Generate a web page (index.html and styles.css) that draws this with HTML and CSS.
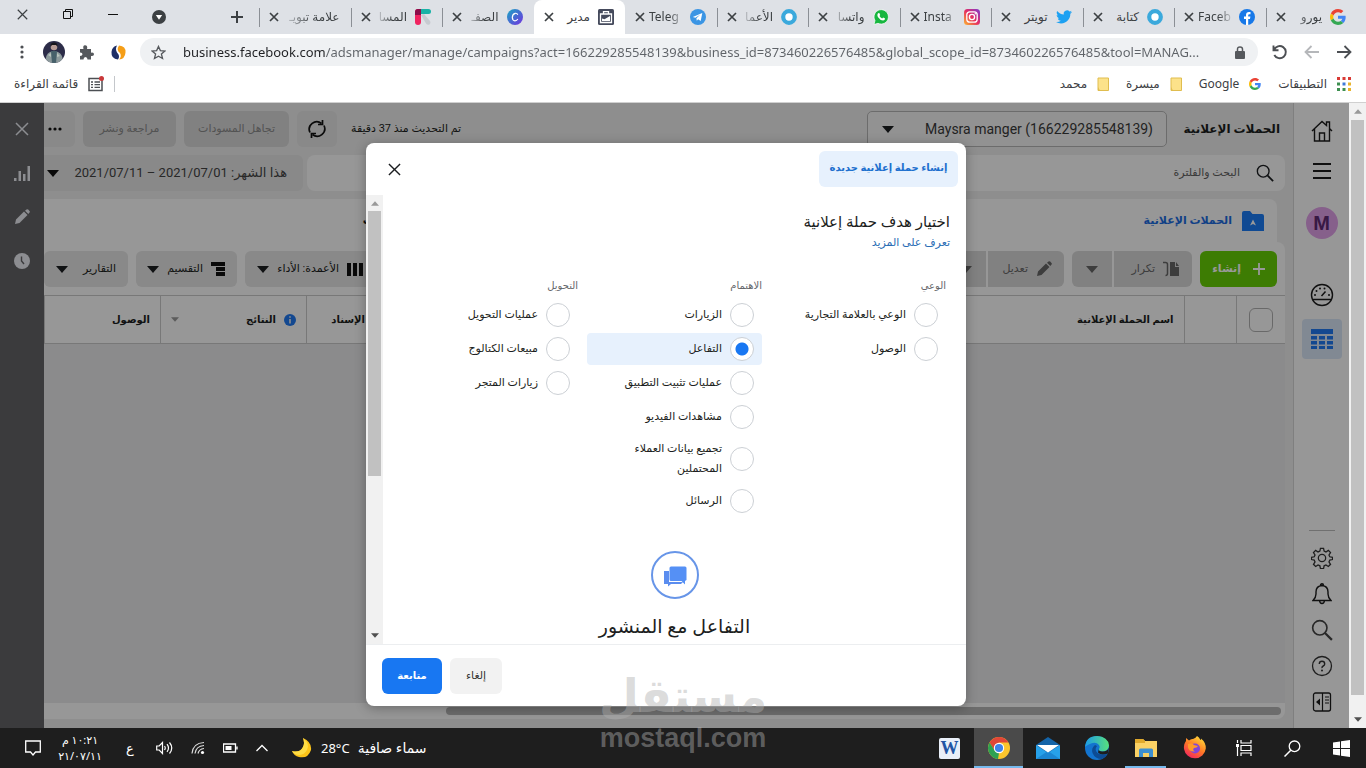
FILE: index.html
```html
<!DOCTYPE html>
<html lang="ar" dir="rtl">
<head>
<meta charset="utf-8">
<title>مدير الإعلانات</title>
<link rel="stylesheet" href="styles.css">
</head>
<body>
<svg class="defs" aria-hidden="true">
  <symbol id="g" viewBox="0 0 48 48"><path fill="#ea4335" d="M24 9.500c3.500 0 6.700 1.200 9.200 3.600l6.900-6.900C35.900 2.400 30.500 0 24 0 14.600 0 6.500 5.400 2.600 13.200l8 6.200C12.400 13.700 17.700 9.500 24 9.500z"/><path fill="#4285f4" d="M47 24.500c0-1.600-.2-3.100-.4-4.500H24v9h12.900c-.6 3-2.300 5.500-4.800 7.200l7.700 6C44.400 38 47 31.800 47 24.500z"/><path fill="#fbbc05" d="M10.500 28.600c-.5-1.500-.8-3-.8-4.600s.3-3.100.8-4.600l-8-6.200C1 16.500 0 20.100 0 24s.9 7.500 2.600 10.800z"/><path fill="#34a853" d="M24 48c6.500 0 11.900-2.100 15.900-5.800l-7.700-6c-2.200 1.500-4.900 2.300-8.200 2.300-6.300 0-11.600-4.200-13.500-9.900l-8 6.200C6.500 42.600 14.600 48 24 48z"/></symbol>
  <symbol id="x" viewBox="0 0 10 10"><path d="M1 1l8 8M9 1l-8 8" stroke="currentColor" stroke-width="1.700" fill="none"/></symbol>
  <symbol id="thinx" viewBox="0 0 14 14"><path d="M1 1l12 12M13 1L1 13" stroke="currentColor" stroke-width="1.500" fill="none"/></symbol>
  <symbol id="caret" viewBox="0 0 12 7"><path d="M0 0h12L6 7z" fill="currentColor"/></symbol>
  <symbol id="ring" viewBox="0 0 16 16"><circle cx="8" cy="8" r="5.800" fill="#fff" stroke="#3ba9dc" stroke-width="4.200"/></symbol>
  <symbol id="pencil" viewBox="0 0 16 16"><path d="M1 15l1-4.500L10 2.600l3.500 3.500-8 8zM11 1.700L12.500.4q.9-.6 1.700.2l1.300 1.300q.8.900 0 1.700L14.300 5z" fill="currentColor"/></symbol>
  <symbol id="folder" viewBox="0 0 12 14"><path d="M1 1h10.500v12.500H1z" fill="#fce28a" stroke="#e0bd4f"/><path d="M1 10l2 3.500H1z" fill="#e0bd4f"/></symbol>
  <symbol id="lens" viewBox="0 0 20 20"><circle cx="8" cy="8" r="6.500" fill="none" stroke="currentColor" stroke-width="1.500"/><path d="M12.700 12.700L19 19" stroke="currentColor" stroke-width="2"/></symbol>
</svg>

<header class="browser">
  <div class="tabstrip">
    <div class="tabs">
      <div class="tab"><svg class="fav"><use href="#g"/></svg><span>يورو</span><svg class="tx"><use href="#x"/></svg></div>
      <div class="tab"><svg class="fav" viewBox="0 0 16 16"><circle cx="8" cy="8" r="8" fill="#1778e8"/><path d="M7 16v-6H5V7.500h2V6q0-3 3-3h1.500v2.300h-1.300q-1 0-1 1v1.200h2.200L11 10H9.200v6z" fill="#fff"/></svg><span dir="ltr">Faceb</span><svg class="tx"><use href="#x"/></svg></div>
      <div class="tab"><svg class="fav"><use href="#ring"/></svg><span class="whole">كتابة</span><svg class="tx"><use href="#x"/></svg></div>
      <div class="tab"><svg class="fav" viewBox="0 0 24 24"><path fill="#1da1f2" d="M24 4.600c-.9.400-1.800.7-2.800.8 1-.6 1.800-1.600 2.200-2.700-1 .6-2 1-3.100 1.200A4.900 4.900 0 0 0 11.800 8.400C7.700 8.100 4.100 6.100 1.700 3.100.4 5.300 1 8.200 3.200 9.700c-.8 0-1.600-.3-2.200-.6 0 2.300 1.600 4.400 3.900 4.900-.7.200-1.500.2-2.200.1.600 2 2.400 3.400 4.600 3.400A9.900 9.900 0 0 1 0 19.500a13.900 13.900 0 0 0 7.500 2.200c9.100 0 14.300-7.700 14-14.600 1-.7 1.800-1.600 2.500-2.500z"/></svg><span class="whole">تويتر</span><svg class="tx"><use href="#x"/></svg></div>
      <div class="tab"><svg class="fav" viewBox="0 0 16 16"><linearGradient id="ig" x1="0" y1="1" x2="1" y2="0"><stop stop-color="#fdb62f"/><stop offset=".5" stop-color="#e52d63"/><stop offset="1" stop-color="#7d3bd3"/></linearGradient><rect width="16" height="16" rx="3.500" fill="url(#ig)"/><rect x="2.800" y="2.800" width="10.400" height="10.400" rx="3" fill="none" stroke="#fff" stroke-width="1.300"/><circle cx="8" cy="8" r="2.600" fill="none" stroke="#fff" stroke-width="1.300"/><circle cx="11.300" cy="4.800" r=".8" fill="#fff"/></svg><span dir="ltr">Insta</span><svg class="tx"><use href="#x"/></svg></div>
      <div class="tab"><svg class="fav" viewBox="0 0 16 16"><path d="M1 15.500l1-4A7.200 7.200 0 1 1 5 14.300z" fill="#17b63f" stroke="#fff" stroke-width=".7"/><path d="M5 4.300l1.300-.2.900 2-.7 1q1 1.800 2.700 2.400l.9-1 2 1q-.2 2-2 2.100-3-.1-5.200-3.500-1.200-2 .1-3.800z" fill="#fff"/></svg><span>واتسا</span><svg class="tx"><use href="#x"/></svg></div>
      <div class="tab"><svg class="fav"><use href="#ring"/></svg><span>الأعما</span><svg class="tx"><use href="#x"/></svg></div>
      <div class="tab plain"><svg class="fav" viewBox="0 0 16 16"><circle cx="8" cy="8" r="8" fill="#3b95e4"/><path d="M2.800 7.900l9.500-3.800-1.600 8-2.600-1.900-1.300 1.500-.4-2.500 4-3.700-5 3.200z" fill="#fff"/></svg><span dir="ltr">Teleg</span><svg class="tx"><use href="#x"/></svg></div>
      <div class="tab active"><svg class="fav" viewBox="0 0 16 16"><rect width="16" height="16" rx="1.500" fill="#454a5c"/><path d="M5.500 5V2.600h5V5M2.500 5h11v8.500h-11z" fill="none" stroke="#fff" stroke-width="1.300"/><path d="M4 12V9.500l2.500.8L12 7v5z" fill="#fff"/></svg><span class="whole">مدير</span><svg class="tx"><use href="#x"/></svg></div>
      <div class="tab"><svg class="fav" viewBox="0 0 16 16"><linearGradient id="cv" x1="0" y1="0" x2="1" y2="1"><stop stop-color="#18a8c4"/><stop offset="1" stop-color="#7430e0"/></linearGradient><circle cx="8" cy="8" r="8" fill="url(#cv)"/><path d="M10.800 5.700Q10 4 8.200 4.300 5.400 5 5.300 8.500q.2 3.200 2.700 3.300 1.700 0 2.800-1.800" fill="none" stroke="#fff" stroke-width="1.200"/></svg><span>الصفـ</span><svg class="tx"><use href="#x"/></svg></div>
      <div class="tab"><svg class="fav" viewBox="0 0 16 16"><path d="M6 0h7.500Q16 0 16 2.500T13.500 5H6z" fill="#19b2a6"/><path d="M6 6l3-1 6 7q1 2-.5 3.500-2 1-3.300-.8z" fill="#c7cbd1"/><path d="M0 3Q0 0 3 0h3v13q0 3-3 3t-3-3z" fill="#f02360"/><path d="M0 3Q0 0 3 0h3v6H0z" fill="#8b0d4a"/></svg><span>المسا</span><svg class="tx"><use href="#x"/></svg></div>
      <div class="tab noicon"><span>علامة تبويـ</span><svg class="tx"><use href="#x"/></svg></div>
    </div>
    <div class="wincontrols">
      <button class="newtab" aria-label="علامة تبويب جديدة"><svg width="12" height="12" viewBox="0 0 12 12"><path d="M6 0v12M0 6h12" stroke="#3c4043" stroke-width="2"/></svg></button>
      <button class="tabsearch" aria-label="بحث"><svg width="14" height="14" viewBox="0 0 14 14"><circle cx="7" cy="7" r="7" fill="#3c4043"/><path d="M3.800 5h6.400L7 9.800z" fill="#fff"/></svg></button>
      <button aria-label="تصغير"><svg width="10" height="10" viewBox="0 0 10 10"><path d="M0 5.500h10" stroke="#111"/></svg></button>
      <button aria-label="استعادة"><svg width="10" height="10" viewBox="0 0 10 10"><path d="M.5 2.500h7v7h-7zM2.500 2.500v-2h7v7h-2" fill="none" stroke="#111"/></svg></button>
      <button aria-label="إغلاق"><svg width="11" height="11" viewBox="0 0 14 14"><use href="#thinx"/></svg></button>
    </div>
  </div>

  <div class="toolbar">
    <button aria-label="رجوع"><svg width="16" height="16" viewBox="0 0 16 16"><path d="M1 8h13M8.500 2l6 6-6 6" fill="none" stroke="#4c4f53" stroke-width="1.800"/></svg></button>
    <button aria-label="تقدم"><svg width="16" height="16" viewBox="0 0 16 16"><path d="M15 8H2M7.500 2l-6 6 6 6" fill="none" stroke="#b5b7ba" stroke-width="1.800"/></svg></button>
    <button aria-label="تحديث"><svg width="16" height="16" viewBox="0 0 16 16"><path d="M1.500 1.500v4.700h5M2 6a6.100 6.100 0 1 1 .3 5" fill="none" stroke="#4c4f53" stroke-width="1.900"/></svg></button>
    <label class="urlbar">
      <svg width="10" height="13" viewBox="0 0 10 13"><rect y="5" width="10" height="8" rx="1" fill="#55585c"/><path d="M2.500 5V3.200q0-2.200 2.500-2.200t2.500 2.200V5" fill="none" stroke="#55585c" stroke-width="1.500"/></svg>
      <input dir="ltr" aria-label="العنوان" value="business.facebook.com/adsmanager/manage/campaigns?act=166229285548139&amp;business_id=873460226576485&amp;global_scope_id=873460226576485&amp;tool=MANAG...">
      <svg width="15" height="15" viewBox="0 0 16 16"><path d="M8 1.500l2 4.500 4.800.4-3.700 3.200 1.200 4.800L8 11.900l-4.300 2.500 1.200-4.800L1.200 6.400 6 6z" fill="none" stroke="#55585c" stroke-width="1.400"/></svg>
    </label>
    <button aria-label="إضافة"><svg width="15" height="15" viewBox="0 0 15 15"><path d="M8 0.500Q15 1 14.500 7.500 14 14 8 14.500q3-3 1-6.500Q5 5 8 .5z" fill="#f59e17"/><path d="M6 .5Q4 4 6 7.500q3.500 3.500 1 7Q0 14 .5 7 1 1.500 6 .5z" fill="#1f2f66"/></svg></button>
    <button aria-label="الإضافات"><svg width="15" height="15" viewBox="0 0 15 15"><path d="M1 4h3.500q-1-3.500 1.500-3.700Q9 .500 8 4h4v3.700q3-.6 3 1.600t-3 1.700v3.500H8.500q0-2.500-2-2.500T4.500 14.500H1V11q2.500 0 2.500-1.800T1 7.500z" fill="#55585c"/></svg></button>
    <button aria-label="الملف الشخصي"><svg width="22" height="22" viewBox="0 0 22 22"><clipPath id="av"><circle cx="11" cy="11" r="11"/></clipPath><g clip-path="url(#av)"><path fill="#2c2c48" d="M0 0h22v22H0z"/><path fill="#8d9a9c" d="M3 22q-1-9 4-11l4-1 4 1q5 2 5 11z"/><path fill="#46606a" d="M8 10h6l-1 12H9z"/><circle cx="11" cy="6" r="3.300" fill="#b89c95"/><path d="M7.500 6Q7 1.500 11 1.500T14.500 6L13 4H9z" fill="#18171c"/><path fill="#b9c3bd" d="M5 14l3-2v4zM14 12l3 3-3 1z"/></g></svg></button>
    <button aria-label="القائمة"><svg width="4" height="16" viewBox="0 0 4 16"><g fill="#4c4f53"><circle cx="2" cy="3" r="1.600"/><circle cx="2" cy="8" r="1.600"/><circle cx="2" cy="13" r="1.600"/></g></svg></button>
  </div>

  <nav class="bookmarks">
    <a href="#"><svg width="14" height="14" viewBox="0 0 14 14"><path fill="#d93a35" d="M0 0h3v3H0zM5.500 0h3v3h-3zM11 0h3v3h-3z"/><path fill="#3d8f50" d="M0 5.500h3v3H0zM0 11h3v3H0z"/><path fill="#3f79d8" d="M5.500 5.500h3v3h-3z"/><path fill="#e8b32c" d="M11 5.500h3v3h-3zM11 11h3v3h-3z"/><path fill="#3d8f50" d="M5.500 11h3v3h-3z"/></svg>التطبيقات</a>
    <a href="#"><svg width="12" height="12"><use href="#g"/></svg><bdi>Google</bdi></a>
    <a href="#"><svg width="12" height="14"><use href="#folder"/></svg>ميسرة</a>
    <a href="#"><svg width="12" height="14"><use href="#folder"/></svg>محمد</a>
    <a href="#" class="reading"><svg width="16" height="16" viewBox="0 0 16 16"><path d="M1 2.500h13v12H1z" fill="none" stroke="#4c4f53" stroke-width="1.500"/><path d="M3 6h2M6.500 6h5.500M3 8.700h2M6.500 8.700h5.500M3 11.400h2M6.500 11.400h5.500" stroke="#4c4f53" stroke-width="1.300"/><circle cx="13.500" cy="2.500" r="2.500" fill="#c9383a"/></svg>قائمة القراءة</a>
  </nav>
</header>

<div class="viewport">
  <div class="vscroll page-scroll"><svg class="arr up"><use href="#caret"/></svg><i></i><svg class="arr"><use href="#caret"/></svg></div>
  <div class="app">
    <nav class="rail">
      <a href="#" aria-label="الرئيسية"><svg width="22" height="22" viewBox="0 0 22 22"><path d="M1 11L11 1.500l4.500 4V2h3v6.500L21 11M3.500 9v12h15V9M8.500 21v-8h5v8" fill="none" stroke="#1c1c1c" stroke-width="1.400"/></svg></a>
      <a href="#" aria-label="القائمة"><svg width="18" height="16" viewBox="0 0 18 16"><path d="M0 1h18M0 8h18M0 15h18" stroke="#1c1c1c" stroke-width="2"/></svg></a>
      <a href="#" class="avatar">M</a>
      <a href="#" class="gauge" aria-label="نظرة عامة"><svg width="24" height="24" viewBox="0 0 24 24"><circle cx="12" cy="12" r="10.500" fill="none" stroke="#1c1c1c" stroke-width="1.400"/><path d="M2 16.500h20M11.500 13l4-4.500" stroke="#1c1c1c" stroke-width="1.500"/><g fill="#1c1c1c"><circle cx="5" cy="12" r="1"/><circle cx="6.500" cy="8" r="1"/><circle cx="10" cy="5.500" r="1"/><circle cx="14.500" cy="5.500" r="1"/><circle cx="19" cy="12" r="1"/></g></svg></a>
      <a href="#" class="on" aria-label="الحملات"><svg width="22" height="20" viewBox="0 0 22 20"><path fill="#2079f0" d="M0 0h22v5H0zM0 7h6v3.500H0zM8 7h6v3.500H8zM16 7h6v3.500h-6zM0 12h6v3.500H0zM8 12h6v3.500H8zM16 12h6v3.500h-6zM0 17h6v3H0zM8 17h6v3H8zM16 17h6v3h-6z"/></svg></a>
      <div class="railfoot">
        <a href="#" aria-label="الإعدادات"><svg width="22" height="22" viewBox="0 0 24 24"><circle cx="12" cy="12" r="4" fill="none" stroke="#333" stroke-width="1.400"/><path d="M10.300 1.500h3.400l.6 3 2 .9 2.600-1.700 2.400 2.400-1.700 2.600.9 2 3 .6v2.400l-3 .6-.9 2 1.700 2.600-2.400 2.400-2.600-1.700-2 .9-.6 3h-3.400l-.6-3-2-.9-2.600 1.700-2.400-2.400 1.700-2.600-.9-2-3-.6v-2.400l3-.6.9-2-1.700-2.600 2.400-2.400 2.600 1.700 2-.9z" fill="none" stroke="#333" stroke-width="1.400"/></svg></a>
        <a href="#" aria-label="الإشعارات"><svg width="20" height="22" viewBox="0 0 20 22"><path d="M1 17.500q3-3 3-6.500V9q0-6 6-6.500 6 .5 6 6.500v2q0 3.500 3 6.500zM7.500 17.500q.3 3 2.500 3t2.500-3M8.500 2.500q0-1.700 1.500-1.700t1.500 1.700" fill="none" stroke="#1c1c1c" stroke-width="1.400"/></svg></a>
        <a href="#" aria-label="بحث"><svg width="22" height="22" class="dim"><use href="#lens"/></svg></a>
        <a href="#" aria-label="مساعدة"><svg width="22" height="22" viewBox="0 0 22 22"><circle cx="11" cy="11" r="9.500" fill="none" stroke="#333" stroke-width="1.300"/><path d="M8.300 9q0-2.700 2.700-2.700T13.700 9q0 1.300-1.500 2T11 13.200" fill="none" stroke="#333" stroke-width="1.400"/><circle cx="11" cy="15.500" r="1" fill="#333"/></svg></a>
        <a href="#" aria-label="طي"><svg width="20" height="20" viewBox="0 0 20 20"><rect x="1.500" y="1" width="17" height="18" rx="2" fill="none" stroke="#1c1c1c" stroke-width="1.300"/><path d="M10.500 1v18M13 5h4M13 8h4M13 11h4" stroke="#1c1c1c" stroke-width="1.200"/><path d="M4 10l4-3.500v7z" fill="#1c1c1c"/></svg></a>
      </div>
    </nav>

    <main class="main">
      <div class="row top">
        <h1>الحملات الإعلانية</h1>
        <div class="account"><select aria-label="الحساب الإعلاني"><option>Maysra manger (166229285548139)</option></select><svg class="car"><use href="#caret"/></svg></div>
        <span class="updated">تم التحديث منذ 37 دقيقة</span>
        <button class="btn refresh" aria-label="تحديث"><svg width="20" height="20" viewBox="0 0 20 20"><path d="M3 13.500A7.500 7.500 0 0 1 14.500 4.500M17 6.500A7.500 7.500 0 0 1 5.500 15.500" fill="none" stroke="#111" stroke-width="1.700"/><path d="M15.500 1v4.500H11M4.500 19v-4.500H9" fill="none" stroke="#111" stroke-width="1.700"/></svg></button>
        <button class="btn off drafts">تجاهل المسودات</button>
        <button class="btn off review">مراجعة ونشر</button>
        <button class="btn more" aria-label="المزيد"><svg width="14" height="4" viewBox="0 0 14 4"><g fill="#111"><circle cx="2" cy="2" r="1.600"/><circle cx="7" cy="2" r="1.600"/><circle cx="12" cy="2" r="1.600"/></g></svg></button>
      </div>
      <div class="row find">
        <label class="search"><svg width="18" height="18"><use href="#lens"/></svg><input placeholder="البحث والفلترة" aria-label="البحث والفلترة"></label>
        <button class="btn date"><span>هذا الشهر: 2021/07/01 – 2021/07/11</span><svg class="car"><use href="#caret"/></svg></button>
      </div>
      <div class="levels">
        <a href="#" class="cur"><svg width="22" height="20" viewBox="0 0 22 20"><path d="M0 2q0-2 2-2h6l2.500 3H20q2 0 2 2v15H0z" fill="#1b7cf5"/><path d="M11 8.500l3 6-3-1.500-3 1.500z" fill="#fff"/></svg>الحملات الإعلانية</a>
        <a href="#"><svg width="22" height="20" viewBox="0 0 22 20"><path d="M0 0h10v9H0zM12 0h10v9H12zM0 11h10v9H0zM12 11h10v9H12z" fill="#333"/></svg>المجموعات الإعلانية</a>
        <a href="#"><svg width="22" height="20" viewBox="0 0 22 20"><path d="M0 2h22v16H0z" fill="#333"/></svg>الإعلانات</a>
      </div>
      <section class="sheet">
        <div class="tools">
          <button class="btn create"><svg width="12" height="12" viewBox="0 0 12 12"><path d="M6 0v12M0 6h12" stroke="#fff" stroke-width="1.800"/></svg>إنشاء</button>
          <div class="pair"><button class="btn off dup"><svg width="17" height="16" viewBox="0 0 17 16"><path d="M7 1h5v5h4v9H7zM13 1l3 4h-3z" fill="#666"/><path d="M0 1.500h2.500q2 0 2 2v9q0 2-2 2" fill="none" stroke="#666" stroke-width="1.500"/></svg>تكرار</button><button class="btn off arrow" aria-label="خيارات"><svg class="car"><use href="#caret"/></svg></button></div>
          <div class="pair"><button class="btn off edit"><svg width="16" height="16"><use href="#pencil"/></svg>تعديل</button><button class="btn off arrow" aria-label="خيارات"><svg class="car"><use href="#caret"/></svg></button></div>
          <button class="btn cols"><svg width="16" height="13" viewBox="0 0 16 13"><path d="M0 0h4v13H0zM6 0h4v13H6zM12 0h4v13h-4z" fill="#111"/></svg>الأعمدة: الأداء<svg class="car"><use href="#caret"/></svg></button>
          <button class="btn split"><svg width="14" height="14" viewBox="0 0 14 14"><path d="M0 0h14v4H0zM5 5h9v4H5zM5 10h9v4H5z" fill="#111"/></svg>التقسيم<svg class="car"><use href="#caret"/></svg></button>
          <button class="btn reports">التقارير<svg class="car"><use href="#caret"/></svg></button>
        </div>
        <table class="grid">
          <colgroup><col class="c1"><col class="c2"><col><col class="c4"><col class="c5"><col class="c6"></colgroup>
          <tr><th><input type="checkbox" aria-label="تحديد الكل"></th><th></th><th class="name">اسم الحملة الإعلانية</th><th class="attr">الإسناد</th>
          <th><div class="res"><svg width="12" height="12" viewBox="0 0 12 12"><circle cx="6" cy="6" r="6" fill="#2079f0"/><path d="M6 5v4.500M6 2.300v1.500" stroke="#eee" stroke-width="1.600"/></svg>النتائج<svg class="car sm"><use href="#caret"/></svg></div></th><th>الوصول</th></tr>
        </table>
        <div class="empty"></div>
        <div class="hscroll"><i></i></div>
      </section>
    </main>

    <aside class="side">
      <button aria-label="إغلاق"><svg width="14" height="14"><use href="#thinx"/></svg></button>
      <button aria-label="الرسوم"><svg width="16" height="15" viewBox="0 0 16 15"><path d="M0 12h2.500v3H0zM4.500 5H7v10H4.500zM9 8h2.500v7H9zM13.500 0H16v15h-2.500z" fill="currentColor"/></svg></button>
      <button aria-label="تعديل"><svg width="16" height="16"><use href="#pencil"/></svg></button>
      <button aria-label="السجل"><svg width="16" height="16" viewBox="0 0 16 16"><circle cx="8" cy="8" r="8" fill="currentColor"/><path d="M7.500 3.500V8l2.500 3" fill="none" stroke="#3b3b3d" stroke-width="1.400"/></svg></button>
    </aside>

    <div class="backdrop">
      <form class="modal" role="dialog" aria-label="إنشاء حملة إعلانية جديدة">
        <div class="mhead"><b>إنشاء حملة إعلانية جديدة</b><button type="button" aria-label="إغلاق"><svg width="13" height="13"><use href="#thinx"/></svg></button></div>
        <div class="mbody">
          <div class="mcontent">
            <h2>اختيار هدف حملة إعلانية</h2>
            <a href="#" class="learn">تعرف على المزيد</a>
            <div class="goals">
              <fieldset><legend>الوعي</legend>
                <label><input type="radio" name="goal">الوعي بالعلامة التجارية</label>
                <label><input type="radio" name="goal">الوصول</label></fieldset>
              <fieldset><legend>الاهتمام</legend>
                <label><input type="radio" name="goal">الزيارات</label>
                <label class="sel"><input type="radio" name="goal" checked>التفاعل</label>
                <label><input type="radio" name="goal">عمليات تثبيت التطبيق</label>
                <label><input type="radio" name="goal">مشاهدات الفيديو</label>
                <label class="two"><input type="radio" name="goal"><span>تجميع بيانات العملاء المحتملين</span></label>
                <label><input type="radio" name="goal">الرسائل</label></fieldset>
              <fieldset><legend>التحويل</legend>
                <label><input type="radio" name="goal">عمليات التحويل</label>
                <label><input type="radio" name="goal">مبيعات الكتالوج</label>
                <label><input type="radio" name="goal">زيارات المتجر</label></fieldset>
            </div>
            <div class="detail">
              <svg width="48" height="48" viewBox="0 0 48 48"><circle cx="24" cy="24" r="23" fill="#fff" stroke="#6795e8" stroke-width="2"/><path d="M13 20h5v11h14l-2 2H20l-3 2.500V33h-4z" fill="#5b8def"/><path d="M20 15.500h14q1.500 0 1.500 1.500v12l-1.500 1v3.500L30.500 30H20q-1.500 0-1.500-1.500V17q0-1.500 1.500-1.500z" fill="#5590f5"/></svg>
              <h3>التفاعل مع المنشور</h3>
            </div>
          </div>
          <div class="vscroll"><svg class="arr up"><use href="#caret"/></svg><i></i><svg class="arr"><use href="#caret"/></svg></div>
        </div>
        <div class="mfoot"><button type="button" class="cancel">إلغاء</button><button type="button" class="go">متابعة</button></div>
      </form>
    </div>
  </div>
</div>

<footer class="taskbar">
  <button aria-label="ابدأ"><svg width="17" height="17" viewBox="0 0 17 17"><path d="M0 2.500l7-1V8H0zM8 1.300L17 0v8H8zM0 9h7v6.500l-7-1zM8 9h9v8l-9-1.300z" fill="#fff"/></svg></button>
  <button aria-label="بحث"><svg width="17" height="17" viewBox="0 0 17 17"><circle cx="10.500" cy="6.300" r="5.300" fill="none" stroke="#fff" stroke-width="1.300"/><path d="M6.800 10.200L.5 16.500" stroke="#fff" stroke-width="1.500"/></svg></button>
  <button aria-label="عرض المهام"><svg width="16" height="16" viewBox="0 0 16 16"><path d="M5 0v3h10V0M5 16v-3h10v3M5 5.500h10v5H5zM1.500 0v3M1.500 7v9" fill="none" stroke="#fff" stroke-width="1.200"/><path d="M0 4h3v3H0z" fill="#fff"/></svg></button>
  <button aria-label="Firefox"><svg width="24" height="24" viewBox="0 0 24 24"><linearGradient id="ff" x1=".8" y1="0" x2=".2" y2="1"><stop stop-color="#ffe03a"/><stop offset=".5" stop-color="#ff7a25"/><stop offset="1" stop-color="#f01f62"/></linearGradient><path d="M14 0q2 1 3.500 4 1-.5.500-1.500 5 4 4.800 10A11 11 0 0 1 1 13Q.5 8 3 5V2l3 2.500Q8 2.500 10 3q3-1 4-3z" fill="url(#ff)"/><circle cx="12" cy="12.500" r="5" fill="#8245d8"/><path d="M5 8q4-2 6 1l4 1q-1 2-4 2-2 2 1 3.500-6 .5-7-4z" fill="#ff9a2a"/></svg></button>
  <button class="open" aria-label="مستكشف الملفات"><svg width="22" height="20" viewBox="0 0 22 20"><path d="M0 1h8l2 2h12v16H0z" fill="#fad165"/><path d="M0 1h8l2 2v2H0z" fill="#e0a92c"/><path d="M4 19v-7q0-1.500 1.500-1.500h11q1.500 0 1.500 1.500v7h-4v-4H8v4z" fill="#3d8fd0"/></svg></button>
  <button aria-label="Edge"><svg width="24" height="24" viewBox="0 0 24 24"><linearGradient id="ed"><stop stop-color="#1c9be8"/><stop offset="1" stop-color="#58e07c"/></linearGradient><circle cx="12" cy="12" r="12" fill="#1374cf"/><path d="M0 11Q1 0 12 0q11 .5 12 9.500-.5 6-7 6-4-.2-3-2.500 1.500-2 0-4-3-3.500-8-1.500T0 11z" fill="url(#ed)"/><path d="M10 9q-4 3-2.500 8 2.500 6 9.500 6 4-1.500 5.500-5-6 2-10-1-3.500-3.500-.5-7z" fill="#0d4c94"/><path d="M14 12.500q-1 3 3.500 3 5 0 6.500-4l-1 6q-7 2.500-10-1z" fill="#1e1e1e"/></svg></button>
  <button aria-label="البريد"><svg width="24" height="22" viewBox="0 0 24 22"><path d="M0 8l12-8 12 8v14H0z" fill="#1464a8"/><path d="M0 8l12 8L24 8v14H0z" fill="#27a1ea"/><path d="M0 22l12-8 12 8z" fill="#1b86d3"/><path d="M1 8h22l-11 7.500z" fill="#fff"/></svg></button>
  <button class="open now" aria-label="Chrome"><svg width="22" height="22" viewBox="0 0 22 22"><circle cx="11" cy="11" r="11" fill="#fbc52d"/><path d="M1.500 5.500A11 11 0 0 1 20.500 5.500H11L6.500 13.500z" fill="#e04638"/><path d="M1.500 5.500L6.700 13.500 11 16l-1 6A11 11 0 0 1 1.500 5.500z" fill="#2ea152"/><circle cx="11" cy="11" r="5.200" fill="#fff"/><circle cx="11" cy="11" r="4.100" fill="#3f83ea"/></svg></button>
  <button class="word" aria-label="Word"><span>W</span></button>
  <div class="tray">
    <span class="weather">سماء صافية</span><bdi>28°C</bdi>
    <svg width="20" height="20" viewBox="0 0 20 20"><path d="M11 0q9 4 8 12-3 9-12 7-5-1-7-6 8 2 11-4 2-4 0-9z" fill="#fcc419"/><path d="M12 1q6 5 3 11-4 7-12 4-2-1-3-3 8 2 11-4 2-4 0-9z" fill="#ffdd45"/></svg>
    <svg class="ti far" width="12" height="8" viewBox="0 0 12 8"><path d="M.5 7L6 1.500 11.500 7" fill="none" stroke="#fff" stroke-width="1.300"/></svg>
    <svg class="ti" width="15" height="10" viewBox="0 0 15 10"><path d="M.5 1h12v8H.5zM14 3.500v3" fill="none" stroke="#fff" stroke-width="1.300"/><path d="M2.500 3h6v4h-6z" fill="#fff"/></svg>
    <svg class="ti" width="14" height="14" viewBox="0 0 14 14"><g fill="none" stroke="#ddd" stroke-width="1.200"><path d="M1 12.500Q2 2 13 1.500M4 12.500Q5 5 13 4.500M7 12.500Q8 8 13 7.500"/></g><circle cx="11.500" cy="11.500" r="1.600" fill="#fff"/></svg>
    <svg class="ti" width="17" height="14" viewBox="0 0 17 14"><path d="M.7 5h2.500L6.500 1.500v11L3.200 9H.7z" fill="none" stroke="#fff" stroke-width="1.200"/><path d="M8.500 5q1.500 2 0 4M11 3.200q3 3.800 0 7.600M13.500 1.500q4.500 5.500 0 11" fill="none" stroke="#fff" stroke-width="1.200"/></svg>
    <span class="lang">ع</span>
    <time><span>١٠:٢١ م</span><span>٢١/٠٧/١١</span></time>
    <svg width="16" height="16" viewBox="0 0 16 16"><path d="M.7 1h14.600v11H10.500L8 15l-2.500-3H.7z" fill="none" stroke="#fff" stroke-width="1.300"/></svg>
  </div>
</footer>
<div class="watermark" aria-hidden="true"><b>مستقل</b><span dir="ltr">mostaql.com</span></div>
</body>
</html>
```
FILE: styles.css
```css
* { box-sizing: border-box; }
body { margin: 0; height: 100vh; display: flex; flex-direction: column; overflow: hidden; position: relative; background: #fff; color: #1c1e21; font: 11px/16px Roboto, "DejaVu Sans", sans-serif; white-space: nowrap; }
button, input, select { font: inherit; color: inherit; border: 0; margin: 0; padding: 0; background: none; }
button { display: flex; align-items: center; justify-content: center; }
a { color: inherit; text-decoration: none; }
h1, h2, h3 { margin: 0; }
svg { flex: none; display: block; }
.defs { position: absolute; width: 0; height: 0; }

/* Browser window */
.browser { font-family: "Noto Sans", "DejaVu Sans", sans-serif; font-size: 12px; flex: none; border-bottom: 1px solid #d0d0d0; }
.tabstrip { display: flex; height: 34px; background: #dee1e6; color: #3c4043; }
.tabs { flex: 1; display: flex; min-width: 0; padding-right: 9px; }
.tab { flex: 1 1 0; min-width: 0; display: flex; align-items: center; padding: 0 11px 0 10px; gap: 8px; position: relative; }
.tab::after { content: ""; position: absolute; left: 0; top: 8px; height: 19px; width: 1px; background: #8b8f95; }
.tab.plain::after, .tab.active::after { display: none; }
.tab.active { background: #fff; border-radius: 8px 8px 0 0; }
.tab span { flex: 1; min-width: 0; mask-image: linear-gradient(to left, #000 50%, rgba(0, 0, 0, .2)); }
.tab span[dir=ltr] { margin-left: -4px; mask-image: linear-gradient(to right, #000 60%, rgba(0, 0, 0, .2)); }
.tab span.whole { mask-image: none; }
.fav { width: 16px; height: 16px; }
.tx { width: 10px; height: 10px; }
.wincontrols { display: flex; width: 259px; padding-right: 6px; align-items: center; }
.wincontrols button { width: 46px; height: 28px; align-self: flex-start; }
.wincontrols .newtab { width: 32px; height: 34px; }
.wincontrols .tabsearch { width: 46px; height: 34px; margin-inline: 40px 0; }
.toolbar { display: flex; align-items: center; height: 36px; padding: 0 6px; }
.toolbar button { width: 32px; height: 28px; }
.urlbar { flex: 1; display: flex; align-items: center; gap: 13px; height: 28px; margin: 0 6px; padding: 0 13px 0 11px; border-radius: 14px; background: #eff1f3; }
.urlbar input { flex: 1; min-width: 0; height: 22px; padding: 0 0 0 4px; outline: 0; font-size: 13px; color: transparent; background: linear-gradient(to right, #202124 147px, #5f6368 147px); background-clip: text; -webkit-background-clip: text; }
.bookmarks { display: flex; align-items: center; gap: 17px; height: 32px; padding: 0 15px 4px 14px; color: #3c4043; }
.bookmarks a { display: flex; align-items: center; gap: 10px; }
.bookmarks .reading { margin-inline-start: auto; border-right: 1px solid #c4c7cb; padding-right: 10px; }

/* Page */
.viewport { flex: 1; min-height: 0; display: flex; }
.vscroll { width: 17px; flex: none; display: flex; flex-direction: column; align-items: center; justify-content: space-between; padding: 6px 2px; background: #f1f1f1; }
.vscroll i { width: 13px; height: 265px; margin: 5px 0 auto; background: #c1c1c1; }
.vscroll.page-scroll i { flex: 1; margin: 6px 0 22px; }
.arr { width: 8px; height: 5px; color: #505050; }
.arr.up { transform: rotate(180deg); color: #999; }
.app { flex: 1; min-width: 0; display: flex; position: relative; overflow: hidden; background: #ededed; }
.app::after { content: ""; position: absolute; inset: 0; background: rgba(0, 0, 0, .4); z-index: 1; }
.rail { width: 56px; flex: none; display: flex; flex-direction: column; align-items: center; background: #fcfcfc; border-left: 1px solid #d4d4d4; padding-top: 8px; }
.rail a { width: 40px; height: 40px; display: flex; align-items: center; justify-content: center; flex: none; }
.rail a.avatar { width: 32px; height: 32px; margin: 16px 0 36px; border-radius: 50%; background: #e0a0e8; color: #5e2a72; font: bold 20px "Liberation Sans", sans-serif; }
.rail .gauge { margin-bottom: 4px; }
.rail .on { background: #d8e4f5; border-radius: 4px; }
.railfoot { margin-top: auto; padding: 9px 0 8px; display: flex; flex-direction: column; align-items: center; border-top: 1px solid #bbb; width: 26px; }
.railfoot a { height: 36px; }
.dim { color: #444; }

.main { flex: 1; min-width: 0; display: flex; flex-direction: column; padding: 8px 8px 9px 0; }
.row { display: flex; align-items: center; height: 36px; }
.btn { height: 36px; border-radius: 6px; background: #e4e4e4; gap: 8px; flex: none; }
.btn.off { background: #d8d8d8; color: #8a8a8a; }
.car { width: 12px; height: 7px; }
.top { margin-bottom: 8px; gap: 8px; padding-right: 5px; }
.top h1 { font-size: 12px; width: 100px; margin-left: 5px; }
.account { position: relative; width: 300px; height: 36px; margin-left: auto; }
.account select { width: 100%; height: 36px; appearance: none; border: 1px solid #b5b5b5; border-radius: 5px; padding: 0 13px; font-size: 14px; color: #3a3a3a; background: #f4f4f4; }
.account .car { position: absolute; left: 15px; top: 15px; }
.updated { margin-left: 6px; }
.refresh { width: 40px; }
.drafts { width: 105px; }
.review { width: 93px; }
.more { width: 31px; border-radius: 0 6px 6px 0; padding-right: 10px; }
.find { gap: 4px; margin-bottom: 8px; }
.search { flex: 1; display: flex; align-items: center; gap: 16px; height: 36px; padding: 0 11px; background: #fcfcfc; border-radius: 8px; }
.search input { flex: 1; outline: 0; }
.search input::placeholder { color: #606060; opacity: 1; }
.date { width: 259px; justify-content: space-between; padding: 0 16px 0 3px; border-radius: 0 6px 6px 0; font-size: 13px; color: #444; }
.date .car { color: #111; }
.levels { display: flex; height: 43px; margin-right: 8px; background: #fcfcfc; border-radius: 0 8px 0 0; }
.levels a { width: 411px; flex: none; display: flex; align-items: center; gap: 10px; padding: 0 13px; font-weight: bold; }
.levels .cur { color: #1b6be0; }
.sheet { flex: 1; display: flex; flex-direction: column; min-height: 0; background: #fcfcfc; border-radius: 0 8px 8px 0; }
.tools { display: flex; gap: 8px; padding: 9px 8px 8px 0; }
.tools .btn { justify-content: flex-start; padding: 0 12px; }
.tools .create { width: 77px; background: #67cf05; color: #fff; font-weight: bold; gap: 12px; }
.pair { display: flex; gap: 2px; }
.pair .btn { color: #666; }
.pair .btn:first-child { border-radius: 0 6px 6px 0; }
.pair .btn.arrow { width: 40px; border-radius: 6px 0 0 6px; justify-content: center; }
.tools .dup { width: 78px; }
.tools .edit { width: 76px; }
.cols { width: 130px; margin-right: auto; }
.cols .car, .split .car, .reports .car { margin-right: auto; }
.split { width: 101px; }
.reports { width: 84px; }
.grid { width: 100%; table-layout: fixed; border-collapse: collapse; }
.grid th { height: 48px; padding: 0 10px; text-align: right; font-weight: bold; font-size: 10px; border: solid #c9c9c9; border-width: 1px 0 1px 1px; }
.grid .c1 { width: 49px; } .grid .c2 { width: 52px; } .grid .c4 { width: 69px; } .grid .c5 { width: 146px; } .grid .c6 { width: 116px; }
.grid input { display: block; width: 24px; height: 24px; appearance: none; border: 1px solid #b0b0b0; border-radius: 6px; margin: 0 2px; }
.res { display: flex; align-items: center; gap: 8px; }
.res .sm { width: 8px; height: 5px; margin-right: auto; color: #999; }
.empty { flex: 1; background: #e8e8ea; }
.hscroll { height: 16px; padding: 4px; }
.hscroll i { display: block; height: 8px; width: 835px; border-radius: 4px; background: #b4b4b4; }

.side { width: 44px; flex: none; position: relative; z-index: 2; background: #3b3b3d; color: #8c8d91; display: flex; flex-direction: column; align-items: center; padding-top: 4px; }
.side button { width: 44px; height: 44px; }

/* Dialog */
.backdrop { position: absolute; inset: 0; z-index: 3; display: flex; align-items: flex-start; justify-content: center; padding: 40px 17px 22px 0; }
.modal { width: 600px; height: 100%; display: flex; flex-direction: column; background: #fff; border-radius: 8px; box-shadow: 0 2px 12px rgba(0, 0, 0, .3); overflow: hidden; }
.mhead { flex: none; display: flex; align-items: flex-start; justify-content: space-between; height: 52px; padding: 8px 8px 0 12px; }
.mhead b { width: 139px; height: 36px; font-size: 10px; line-height: 34px; text-align: center; border-radius: 6px; background: #e7f1fd; color: #1d6fce; }
.mhead button { width: 32px; height: 36px; }
.mbody { flex: 1; min-height: 0; display: flex; }
.mcontent { flex: 1; min-width: 0; overflow: hidden; padding: 17px 20px 0; }
.mcontent h2 { font-size: 15px; line-height: 20px; font-weight: normal; margin-right: -4px; }
.learn { display: block; margin-right: -4px; line-height: 22px; color: #2a6db5; }
.goals { display: grid; grid-template-columns: repeat(3, 1fr); gap: 9px; margin-top: 24px; }
fieldset { border: 0; margin: 0; padding: 0; min-width: 0; display: flex; flex-direction: column; gap: 2px; }
legend { padding: 0; font-size: 10px; line-height: 16px; margin-bottom: 5px; color: #65676b; }
.goals label { display: flex; align-items: center; gap: 8px; min-height: 32px; padding: 0 8px; border-radius: 4px; }
.goals .two { min-height: 48px; white-space: normal; line-height: 20px; }
.goals .two span { width: 104px; }
.goals .sel { background: #e7f1fd; }
.goals input { flex: none; width: 24px; height: 24px; appearance: none; border: 1px solid #ccd0d5; border-radius: 50%; background: #fff; }
.goals input:checked { background: radial-gradient(circle, #1877f2 6px, #fff 7px); }
.detail { display: flex; flex-direction: column; align-items: center; margin-top: 34px; }
.detail h3 { margin-top: 12px; font-size: 19px; line-height: 32px; font-weight: normal; }
.mfoot { flex: none; display: flex; justify-content: flex-end; gap: 8px; height: 62px; padding: 13px 16px; border-top: 1px solid #eceef0; }
.mfoot button { height: 36px; border-radius: 6px; }
.mfoot .cancel { width: 52px; background: #f2f2f2; color: #333; }
.mfoot .go { width: 60px; background: #1877f2; color: #fff; font-weight: bold; font-size: 10px; }

/* Taskbar */
.taskbar { flex: none; display: flex; height: 40px; background: #1e1e1e; color: #fff; font-family: "Noto Sans", "DejaVu Sans", sans-serif; }
.taskbar button { width: 49px; height: 40px; flex: none; }
.taskbar .open { position: relative; }
.taskbar .open::after { content: ""; position: absolute; inset: auto 4px 0; height: 2px; background: #76b9ed; }
.taskbar .now { background: #4a4a4a; }
.taskbar .now::after { inset-inline: 0; }
.word span { width: 21px; height: 21px; background: #e9eff8; border-radius: 2px; color: #2255a4; font: bold 18px/20px "Liberation Serif", serif; }
.tray { margin-right: auto; display: flex; align-items: center; padding-left: 25px; font-size: 14px; }
.tray bdi { margin: 0 8px 0 9px; font-size: 13px; }
.ti { margin-right: 18px; }
.ti.far { margin-right: 24px; }
.lang { width: 16px; text-align: center; margin: 0 18px 0 20px; font-size: 13px; }
.tray time { display: flex; flex-direction: column; align-items: center; width: 44px; font-size: 11px; margin-left: 17px; }
.watermark { position: absolute; z-index: 5; left: 600px; top: 668px; width: 166px; display: flex; flex-direction: column; align-items: center; color: rgba(175, 175, 175, .45); pointer-events: none; }
.watermark b { font-size: 46px; line-height: 56px; }
.watermark span { font: bold 27px/28px "Liberation Sans", sans-serif; }
```
